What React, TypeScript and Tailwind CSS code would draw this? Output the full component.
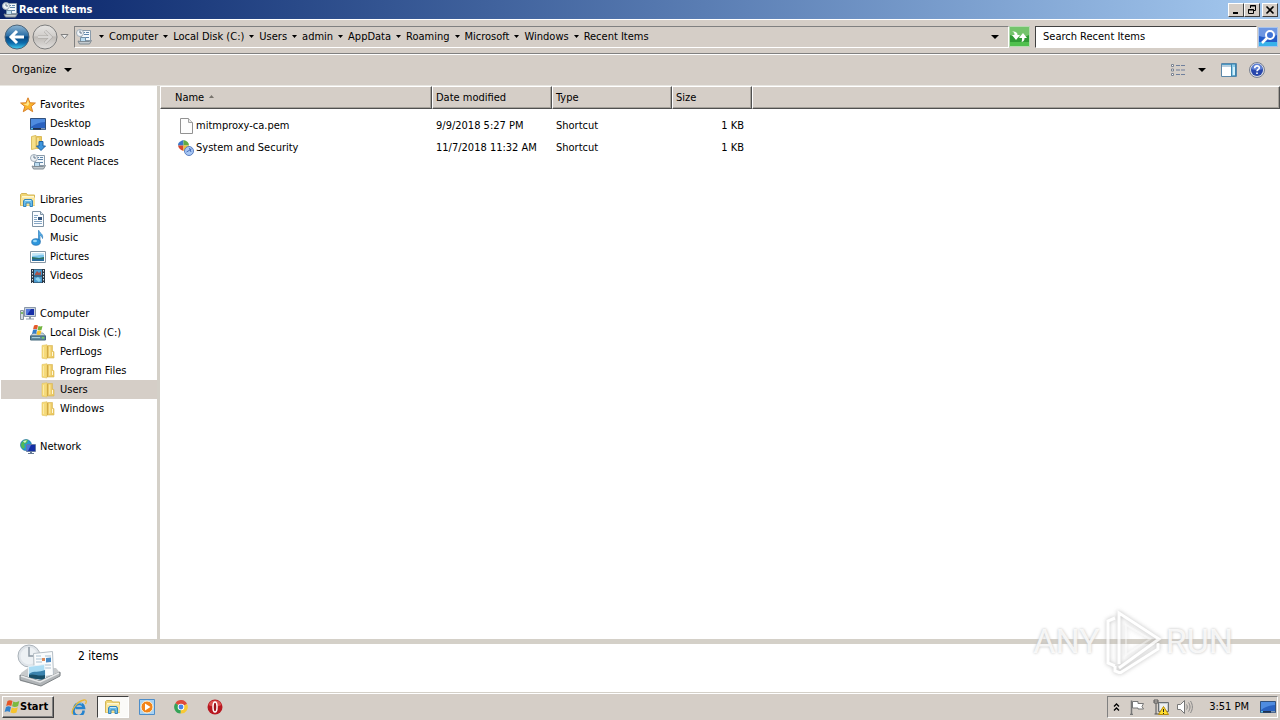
import { ReactNode, useState } from "react";

interface TreeItem {
    label: string;
    icon: ReactNode;
    level: number;
}

interface FileItem {
    name: string;
    icon: ReactNode;
    modified: string;
    type: string;
    size: string;
}

const path = [
    "Computer",
    "Local Disk (C:)",
    "Users",
    "admin",
    "AppData",
    "Roaming",
    "Microsoft",
    "Windows",
    "Recent Items",
];

const groups: TreeItem[][] = [
    [
        { label: "Favorites", icon: <StarIcon />, level: 0 },
        { label: "Desktop", icon: <DesktopIcon />, level: 1 },
        { label: "Downloads", icon: <DownloadsIcon />, level: 1 },
        { label: "Recent Places", icon: <RecentIcon />, level: 1 },
    ],
    [
        { label: "Libraries", icon: <LibraryIcon />, level: 0 },
        { label: "Documents", icon: <DocumentIcon />, level: 1 },
        { label: "Music", icon: <MusicIcon />, level: 1 },
        { label: "Pictures", icon: <PictureIcon />, level: 1 },
        { label: "Videos", icon: <VideoIcon />, level: 1 },
    ],
    [
        { label: "Computer", icon: <ComputerIcon />, level: 0 },
        { label: "Local Disk (C:)", icon: <DiskIcon />, level: 1 },
        { label: "PerfLogs", icon: <FolderIcon />, level: 2 },
        { label: "Program Files", icon: <FolderIcon />, level: 2 },
        { label: "Users", icon: <FolderIcon />, level: 2 },
        { label: "Windows", icon: <FolderIcon />, level: 2 },
    ],
    [{ label: "Network", icon: <NetworkIcon />, level: 0 }],
];

const files: FileItem[] = [
    {
        name: "mitmproxy-ca.pem",
        icon: <BlankFileIcon />,
        modified: "9/9/2018 5:27 PM",
        type: "Shortcut",
        size: "1 KB",
    },
    {
        name: "System and Security",
        icon: <SecurityIcon />,
        modified: "11/7/2018 11:32 AM",
        type: "Shortcut",
        size: "1 KB",
    },
];

const indents = ["pl-[19px]", "pl-[29px]", "pl-[39px]"];

export default function App() {
    return (
        <div className="relative flex min-h-screen flex-col bg-[#d5cec7] font-['DejaVu_Sans_Condensed','DejaVu_Sans',sans-serif] text-[11px] leading-4 text-black">
            <TitleBar />
            <AddressBar />
            <Toolbar />
            <main className="flex grow border-t border-[#e9e7e2] bg-white">
                <Sidebar />
                <FileTable />
            </main>
            <DetailsPane />
            <Taskbar />
            <Watermark />
        </div>
    );
}

function TitleBar() {
    const button =
        "flex h-[14px] w-4 items-center justify-center border border-t-white border-l-white border-r-[#404040] border-b-[#404040] bg-[#d5cec7]";
    return (
        <header className="flex h-[19px] items-center bg-linear-to-r from-[#0a246a] to-[#a6caf0] px-[2px]">
            <RecentIcon />
            <h1 className="grow pl-px font-bold text-white">Recent Items</h1>
            <button className={button} aria-label="Minimize">
                <svg width="10" height="10" viewBox="0 0 10 10">
                    <path d="M2 8h5" stroke="#000" strokeWidth="2" />
                </svg>
            </button>
            <button className={button} aria-label="Restore">
                <svg width="10" height="10" viewBox="0 0 10 10" fill="none" stroke="#000">
                    <path d="M3.5 3V.5h5v5H7M3 1h6M1.5 4.500h5v4h-5zM1 5h6" />
                </svg>
            </button>
            <button className={`${button} ml-[2px]`} aria-label="Close">
                <svg width="10" height="10" viewBox="0 0 10 10">
                    <path d="M1.500 1.500l7 7M8.500 1.500l-7 7" stroke="#000" strokeWidth="1.600" />
                </svg>
            </button>
        </header>
    );
}

function Caret({ small = false }: { small?: boolean }) {
    return small ? (
        <svg width="5" height="3" viewBox="0 0 5 3">
            <path d="M0 0h5L2.500 3z" />
        </svg>
    ) : (
        <svg width="8" height="4" viewBox="0 0 8 4">
            <path d="M0 0h8L4 4z" />
        </svg>
    );
}

function AddressBar() {
    return (
        <div className="flex h-[35px] items-center border-t border-b border-t-white border-b-[#808080] shadow-[0_1px_0_#fff]">
            <button className="ml-1" aria-label="Back">
                <BackIcon />
            </button>
            <button className="ml-[2px]" aria-label="Forward">
                <ForwardIcon />
            </button>
            <button className="ml-[2px]" aria-label="Recent pages">
                <svg width="9" height="6" viewBox="0 0 9 6">
                    <path d="M1 .5h7L4.500 4.500z" fill="#eee" stroke="#808080" />
                </svg>
            </button>
            <nav className="ml-[5px] flex h-[22px] grow items-center border border-t-[#808080] border-r-white border-b-white border-l-[#808080]">
                <span className="pr-[2px] pl-px">
                    <RecentIcon />
                </span>
                {path.map((item) => (
                    <span key={item} className="flex items-center">
                        <button className="px-[5px]" aria-label={`Folders before ${item}`}>
                            <Caret small />
                        </button>
                        <button className="whitespace-nowrap">{item}</button>
                    </span>
                ))}
                <button className="mr-[9px] ml-auto" aria-label="Previous locations">
                    <Caret />
                </button>
            </nav>
            <button aria-label="Refresh">
                <RefreshIcon />
            </button>
            <div className="ml-[5px] flex h-[22px] border border-t-[#404040] border-r-white border-b-white border-l-[#404040] bg-white">
                <input
                    aria-label="Search"
                    placeholder="Search Recent Items"
                    className="w-[220px] pl-[7px] outline-none placeholder:text-black"
                />
            </div>
            <button className="mr-[2px] ml-px" aria-label="Start search">
                <SearchIcon />
            </button>
        </div>
    );
}

function Toolbar() {
    return (
        <div className="flex h-[31px] items-center pr-[15px] pl-3">
            <button className="mr-auto flex items-center gap-2">
                Organize
                <Caret />
            </button>
            <button aria-label="Change your view">
                <svg width="16" height="14" viewBox="0 0 16 14" fill="none">
                    <path d="M1.500 1.500h2v2h-2zM1.500 6h2v2h-2zM1.500 10.500h2v2h-2z" fill="#fff" stroke="#7a8290" />
                    <path d="M6 2.500h4M11 2.500h4M6 7h4M11 7h4M6 11.500h4M11 11.500h4" stroke="#6f7f9c" />
                </svg>
            </button>
            <button className="mx-3" aria-label="More options">
                <Caret />
            </button>
            <button className="mx-[3px]" aria-label="Show the preview pane">
                <svg width="16" height="14" viewBox="0 0 16 14">
                    <path d="M.5.5h15v13H.5z" fill="#fff" stroke="#5a86a8" />
                    <path d="M1 1h14v2H1z" fill="#4d9ac4" />
                    <path d="M1 2h9v2H1z" fill="#b7cfe0" />
                    <path d="M10.500 1h4v12h-4z" fill="#8fcdea" stroke="#3c86b0" />
                    <path d="M12 4h2v8h-2z" fill="#d4f0fb" />
                </svg>
            </button>
            <button className="ml-[9px]" aria-label="Get help">
                <svg width="16" height="16" viewBox="0 0 16 16">
                    <circle cx="8" cy="8" r="7.500" fill="#d9dde6" stroke="#777f91" />
                    <circle cx="8" cy="8" r="6" fill="#2746ac" />
                    <path d="M2.500 7a5.500 5.500 0 0111 0c-3 1.500-8 1.500-11 0z" fill="#5f80d4" />
                    <path d="M5.700 6.200C5.700 3 10.500 3.200 10.300 6c-.1 1.600-2.300 1.500-2.300 3.300M8 10.500v1.600" fill="none" stroke="#fff" strokeWidth="1.600" />
                </svg>
            </button>
        </div>
    );
}

function Sidebar() {
    const [selected, setSelected] = useState("Users");

    return (
        <aside className="flex w-40 shrink-0 flex-col gap-[19px] border-r-[3px] border-[#d4d0c8] pt-[9px] pl-px">
            {groups.map((group, i) => (
                <ul key={i}>
                    {group.map((item) => (
                        <li key={item.label}>
                            <button
                                onClick={() => setSelected(item.label)}
                                className={`flex h-[19px] w-full items-center gap-1 ${indents[item.level]} ${
                                    selected === item.label ? "bg-[#d5cec7]" : ""
                                }`}
                            >
                                {item.icon}
                                {item.label}
                            </button>
                        </li>
                    ))}
                </ul>
            ))}
        </aside>
    );
}

function FileTable() {
    const head =
        "h-[23px] border-t border-r border-b border-l border-t-white border-l-white border-r-[#505050] border-b-[#505050] bg-[#d5cec7] pt-px pl-[3px] text-left font-normal shadow-[inset_-1px_-1px_0_#a5a19a]";
    return (
        <div className="grow">
            <table className="w-full table-fixed border-separate border-spacing-0">
                <colgroup>
                    <col className="w-[272px]" />
                    <col className="w-[120px]" />
                    <col className="w-[120px]" />
                    <col className="w-20" />
                    <col />
                </colgroup>
                <thead>
                    <tr>
                        <th className={head}>
                            <button className="flex items-center gap-[5px] pl-[11px]">
                                Name
                                <svg width="5" height="3" viewBox="0 0 5 3" className="mb-1">
                                    <path d="M0 3h5L2.500 0z" fill="#77736c" />
                                </svg>
                            </button>
                        </th>
                        <th className={head}>Date modified</th>
                        <th className={head}>Type</th>
                        <th className={head}>Size</th>
                        <th className={head}></th>
                    </tr>
                </thead>
                <tbody className="before:block before:h-[6px]">
                    {files.map((file) => (
                        <tr key={file.name} className="h-[22px]">
                            <td>
                                <span className="flex items-center gap-[2px] pl-[18px]">
                                    {file.icon}
                                    {file.name}
                                </span>
                            </td>
                            <td className="pl-1">{file.modified}</td>
                            <td className="pl-1">{file.type}</td>
                            <td className="pr-2 text-right">{file.size}</td>
                            <td></td>
                        </tr>
                    ))}
                </tbody>
            </table>
        </div>
    );
}

function DetailsPane() {
    return (
        <section className="flex h-[53px] shrink-0 gap-4 border-t-[5px] border-[#d4d0c8] bg-white pl-4">
            <RecentLargeIcon />
            <p className="pt-1 text-[12px] leading-4">2 items</p>
        </section>
    );
}

function Taskbar() {
    const item = "flex h-[22px] w-8 items-center justify-center";
    return (
        <footer className="flex h-7 shrink-0 items-center border-t border-[#d4d0c8] pr-[2px] pl-[2px] shadow-[inset_0_1px_0_#fff]">
            <button className="mr-[9px] flex h-[22px] w-[52px] items-center border border-t-white border-r-[#404040] border-b-[#404040] border-l-white pl-px font-bold shadow-[inset_-1px_-1px_0_#808080]">
                <WindowsIcon />
                Start
            </button>
            <button className={item} aria-label="Internet Explorer">
                <IeIcon />
            </button>
            <button
                className={`${item} mr-[2px] ml-[2px] border border-t-[#404040] border-r-white border-b-white border-l-[#404040] bg-[#fbfaf8]`}
                aria-label="Windows Explorer"
            >
                <LibraryIcon />
            </button>
            <button className={item} aria-label="Windows Media Player">
                <PlayerIcon />
            </button>
            <button className={`${item} ml-[2px]`} aria-label="Google Chrome">
                <ChromeIcon />
            </button>
            <button className={`${item} ml-[2px]`} aria-label="Opera">
                <OperaIcon />
            </button>
            <div className="ml-auto flex h-[22px] items-center border border-t-[#808080] border-r-white border-b-white border-l-[#808080] pr-px pl-[5px]">
                <button aria-label="Show hidden icons">
                    <svg width="7" height="8" viewBox="0 0 7 8" fill="none" stroke="#000">
                        <path d="M1 3.500L3.500 1 6 3.500M1 7.500L3.500 5 6 7.500" strokeWidth="1.300" />
                    </svg>
                </button>
                <span className="ml-[9px] flex gap-2">
                    <FlagIcon />
                    <TrayNetworkIcon />
                    <SpeakerIcon />
                </span>
                <time className="ml-4">3:51 PM</time>
                <button className="ml-[11px]" aria-label="Show desktop">
                    <DesktopIcon />
                </button>
            </div>
        </footer>
    );
}

function Watermark() {
    return (
        <div className="pointer-events-none absolute right-[47px] bottom-[46px] flex items-center gap-[3px] font-[Roboto,sans-serif] text-[34px] leading-[66px] text-white/80 [text-shadow:0_0_3px_#bbb]">
            <span>ANY</span>
            <svg
                width="60"
                height="66"
                viewBox="0 0 60 66"
                fill="none"
                stroke="#fff"
                strokeWidth="3"
                className="opacity-80 drop-shadow-[0_0_2px_#aaa]"
            >
                <path d="M12 10l-7 3v42l7 3" />
                <path d="M16 56V5l40 26-40 29" />
                <path d="M12 58v5l5 2 38-24v-6" />
                <path d="M23 17v30l24-16z" strokeWidth="2" opacity="0.500" />
            </svg>
            <span>RUN</span>
        </div>
    );
}

function Icon({ children }: { children: ReactNode }) {
    return (
        <svg width="16" height="16" viewBox="0 0 16 16" className="shrink-0" aria-hidden="true">
            {children}
        </svg>
    );
}

function BackIcon() {
    return (
        <svg width="26" height="26" viewBox="0 0 26 26">
            <defs>
                <linearGradient id="back" x2="0" y2="1">
                    <stop offset="0" stopColor="#8fb6d4" />
                    <stop offset="0.450" stopColor="#2a6ea6" />
                    <stop offset="0.500" stopColor="#07457f" />
                    <stop offset="0.750" stopColor="#0c6bab" />
                    <stop offset="1" stopColor="#46d2f3" />
                </linearGradient>
            </defs>
            <circle cx="13" cy="13" r="12" fill="url(#back)" stroke="#4c6479" />
            <path d="M20 13H8M13 7l-6 6 6 6" fill="none" stroke="#fff" strokeWidth="3" />
        </svg>
    );
}

function ForwardIcon() {
    return (
        <svg width="26" height="26" viewBox="0 0 26 26">
            <defs>
                <linearGradient id="forward" x2="0" y2="1">
                    <stop offset="0" stopColor="#e6e4e2" />
                    <stop offset="0.450" stopColor="#d2cfcc" />
                    <stop offset="0.500" stopColor="#bebab6" />
                    <stop offset="1" stopColor="#e2e0de" />
                </linearGradient>
            </defs>
            <circle cx="13" cy="13" r="12" fill="url(#forward)" stroke="#7e7e7e" />
            <path d="M6 13h12M13 7l6 6-6 6" fill="none" stroke="#aaa7a4" strokeWidth="3" />
            <path d="M6 13h12M13 7l6 6-6 6" fill="none" stroke="#d8d6d4" strokeWidth="2" />
        </svg>
    );
}

function RefreshIcon() {
    return (
        <svg width="21" height="21" viewBox="0 0 21 21">
            <path d="M.5.5h20v20H.5z" fill="#2f9a35" stroke="#b5dbb0" />
            <path d="M1 1h19v8c-6 3-13 3-19 0z" fill="#74c46c" />
            <path d="M1 16h19v4H1z" fill="#4fc04d" />
            <path d="M3 10l4-5 4 5H8.500c0 2 .5 3 2.500 3.500-3.500.5-5.500-1-5.500-3.500z" fill="#fff" transform="rotate(180 7 9.500)" />
            <path d="M10 12l4-5 4 5h-2.500c0 2-.5 3.500-3 4 .5-1 .5-2 .5-4z" fill="#fff" />
        </svg>
    );
}

function SearchIcon() {
    return (
        <svg width="20" height="20" viewBox="0 0 20 20">
            <path d="M.5.5h19v19H.5z" fill="#245cc8" stroke="#a9c4ec" />
            <path d="M1 1h18v7C13 11 7 11 1 9z" fill="#6d96e2" />
            <path d="M1 15h18v4H1z" fill="#39b2ea" />
            <circle cx="12" cy="8" r="4" fill="#3f73d6" stroke="#fff" strokeWidth="2" />
            <path d="M9 11l-5 5" stroke="#fff" strokeWidth="2.500" />
        </svg>
    );
}

function StarIcon() {
    return (
        <Icon>
            <path
                d="M8 .8l2 5 5.400.2-4.200 3.400 1.500 5.300L8 11.700l-4.700 3 1.500-5.300L.6 6 6 5.800z"
                fill="#fbb52c"
                stroke="#d9822b"
                strokeLinejoin="round"
            />
            <path d="M8 3l1.200 3.800L8 9 3 7l3.500-.3z" fill="#ffe68c" />
        </Icon>
    );
}

function DesktopIcon() {
    return (
        <Icon>
            <path d="M.5 2.500h15v11H.5z" fill="#2a62c0" stroke="#31517d" />
            <path d="M1 3h14v3C9 6.500 5 8 1 11z" fill="#4f8ce0" />
            <path d="M1 12h14v1.500H1z" fill="#20324f" />
            <path d="M1 12h2v1.500H1z" fill="#58c3ec" />
            <path d="M11 12h4v1.500h-4z" fill="#7d97b8" />
        </Icon>
    );
}

function DownloadsIcon() {
    return (
        <Icon>
            <path d="M1.500 1.500L6 .5v13l-4.500 1z" fill="#f6e08a" stroke="#dcbf62" />
            <path d="M6.500 1.500h5v12h-5z" fill="#edcb62" stroke="#dbbb5a" />
            <path d="M7.500 3h1v9h-1z" fill="#fff5c4" />
            <path d="M9 6.500h4V11h2.500L11 15.500 6.500 11H9z" fill="#3d95dd" stroke="#1c60a3" />
        </Icon>
    );
}

function RecentIcon() {
    return (
        <Icon>
            <path d="M5.500 1.500h9v10h-9z" fill="#f3f8fc" stroke="#8a9baa" />
            <path d="M7 3.500h2M10 3.500h3M8 5.500h5M8 8.500h5" stroke="#5f86ab" />
            <path d="M4.500 8.500h5v4h-5z" fill="#bcdcf0" stroke="#7491a8" />
            <path d="M2 12l1.500 3h10l2-3.500-2 1H4z" fill="#c4cbd0" stroke="#808b93" />
            <circle cx="4" cy="4" r="3.500" fill="#eef2f6" stroke="#a1adb8" />
            <path d="M4 1.500V4h2" fill="none" stroke="#667a8d" />
        </Icon>
    );
}

function LibraryIcon() {
    return (
        <Icon>
            <path d="M.5 13.500v-11l1-1h5l1 1.500h7v10.500z" fill="#f1d675" stroke="#d3b557" />
            <path d="M2 4h12v2H2z" fill="#fff8d2" />
            <path d="M1 5.500h14v8H1z" fill="#f8e49a" />
            <path d="M3.500 14.500V9l1-1.500h7l1 1.500v5.500H10V11H6v3.500z" fill="#69bce9" stroke="#3584bb" />
            <path d="M5 8.500h6" stroke="#c6eafa" />
        </Icon>
    );
}

function DocumentIcon() {
    return (
        <Icon>
            <path d="M2.500.5h8l3 3v12h-11z" fill="#fbfdff" stroke="#7f93a5" />
            <path d="M10.500.5v3h3" fill="#d7e2ec" stroke="#7f93a5" />
            <path d="M4 4.500h4M4 6.500h3M4 8.500h3M4 10.500h8M4 12.500h8" stroke="#86a6c4" />
            <path d="M8 6h4v3H8z" fill="#34557d" />
        </Icon>
    );
}

function MusicIcon() {
    return (
        <Icon>
            <path d="M9 .5c.5 3 4.500 3 3.500 8-.5-2-1.500-3-2.500-3.300V12H8.500V.5z" fill="#53ace4" stroke="#2c7dbd" strokeWidth="0.700" />
            <ellipse cx="6" cy="12" rx="4.300" ry="3.300" fill="#2e96dc" stroke="#1d6cad" strokeWidth="0.700" />
            <ellipse cx="5" cy="11" rx="2" ry="1.200" fill="#9ad8f7" />
        </Icon>
    );
}

function PictureIcon() {
    return (
        <Icon>
            <path d="M.5 2.500h15v11H.5z" fill="#fff" stroke="#8697a5" />
            <path d="M2 4h12v8H2z" fill="#7cc6ee" />
            <path d="M2 4h12v2c-4-1-7 1-12 1z" fill="#c7e7f7" />
            <path d="M2 8c3 0 5 1 7 1s3-1 5-1v2H2z" fill="#2c7265" />
            <path d="M2 10h12v2H2z" fill="#286c9d" />
        </Icon>
    );
}

function VideoIcon() {
    return (
        <Icon>
            <path d="M1 1h14v14H1z" fill="#293644" />
            <path d="M4 1.500h8v6H4zM4 8.500h8v6H4z" fill="#4b9bd0" />
            <path d="M5 6l2-3 2 2 2-2v4H5z" fill="#a4534b" />
            <path d="M5 11l3-2 3 3-2 2z" fill="#8dd4ef" />
            <path d="M2.500 2v13M13.500 2v13" stroke="#dce5ec" strokeDasharray="1.500 1.500" />
        </Icon>
    );
}

function ComputerIcon() {
    return (
        <Icon>
            <path d="M.5 4.500h3v9h-3z" fill="#d4dce2" stroke="#88949d" />
            <path d="M1 6h2v2H1z" fill="#7cba68" />
            <path d="M4.500 1.500h11v9h-11z" fill="#c7d2df" stroke="#8a97a8" />
            <path d="M6 3h8v6H6z" fill="#172fa8" />
            <path d="M6 3h5L7 9H6z" fill="#5276dc" />
            <path d="M9 11h2v1.500h3v1H6v-1h3z" fill="#8d9caa" />
        </Icon>
    );
}

function DiskIcon() {
    return (
        <Icon>
            <path d="M3 8h10l2.500 3H.5z" fill="#c5d4df" stroke="#708b9c" strokeWidth="0.700" />
            <path d="M.5 11h15v4H.5z" fill="#5f8ba0" stroke="#41677b" />
            <path d="M2 12.500h8" stroke="#a8cfdc" />
            <path d="M12 12h2v1.500h-2z" fill="#76d353" />
            <path d="M4 .5c2-1 3-.5 4 0L7 4.500c-1-.6-2-.7-4 0z" fill="#e45a2b" />
            <path d="M8.500 1c1.500.7 2.500.5 4 0L11.500 5c-1.500.6-2.500.5-4 0z" fill="#73b43e" />
            <path d="M3 5c2-.6 3-.5 4 0L6 9c-1-.6-2-.6-4 0z" fill="#337fc9" />
            <path d="M7.500 5.500c1.500.6 2.500.5 4 0l-1 4c-1.500.6-2.500.5-4 0z" fill="#f6c42e" />
        </Icon>
    );
}

function FolderIcon() {
    return (
        <Icon>
            <path d="M2 1.500L7 .7V15l-5-.8z" fill="#f5da7a" stroke="#e2c461" strokeWidth="0.600" />
            <path d="M7.500 1.500h5V7l1.500.7V14H7.500z" fill="#ecca66" stroke="#d9b650" strokeWidth="0.600" />
            <path d="M7 2h1v12H7z" fill="#d2a944" />
            <path d="M9 2.500h1.500v10H9z" fill="#fbe69a" />
            <path d="M12 8h1v4h-1z" fill="#fff8da" />
            <path d="M3.500 3v10" stroke="#fdeaa4" />
        </Icon>
    );
}

function NetworkIcon() {
    return (
        <Icon>
            <circle cx="6" cy="6" r="5.500" fill="#259bd0" stroke="#196494" strokeWidth="0.600" />
            <path d="M1.500 4C3 1 6 0 8 1L7 4 4 5l1 3-2 2C1 8 .6 6 1.500 4z" fill="#54ba54" />
            <path d="M3 2.500c1-1 3-1.300 4-1L5 4z" fill="#d5f3d1" />
            <path d="M6.500 5.500h9v7h-9z" fill="#b3c3da" stroke="#667ba3" />
            <path d="M7 6h8v6H7z" fill="#152da5" />
            <path d="M7 6h4l-3 6H7z" fill="#4d74dc" />
            <path d="M10 13h2v1h2v1H8v-1h2z" fill="#677b95" />
        </Icon>
    );
}

function BlankFileIcon() {
    return (
        <Icon>
            <path d="M2.500.5h8l4 4v11h-12z" fill="#fdfdfd" stroke="#929292" />
            <path d="M10.500.5v4h4" fill="#e7e7e7" stroke="#a2a2a2" />
        </Icon>
    );
}

function SecurityIcon() {
    return (
        <Icon>
            <path d="M5.500 0v5.500H0C0 3 1 1.500 5.500 0z" fill="#3b78c9" />
            <path d="M5.500 0C9 1 11 2.500 11 5.500H5.500z" fill="#62ab45" />
            <path d="M0 5.500h5.500V11C2 10 .5 8 0 5.500z" fill="#d8472f" />
            <path d="M5.500 5.500H11C10.500 8 9 10 5.500 11z" fill="#f0bf35" />
            <circle cx="11" cy="11" r="4.500" fill="#a8c7f4" stroke="#5b7fc0" />
            <path d="M8.500 12l5-3M11.500 8l1.500 4" stroke="#456dba" />
        </Icon>
    );
}

function RecentLargeIcon() {
    return (
        <svg width="46" height="44" viewBox="0 0 46 44" aria-hidden="true">
            <path d="M5 29l7-5h28l5 6-20 12L4 37z" fill="#c7cacc" />
            <circle cx="13" cy="12" r="11" fill="#dfe4e9" stroke="#aab2b9" />
            <circle cx="13" cy="12" r="8.500" fill="#edf1f4" />
            <path d="M13 3v9h7" fill="none" stroke="#8c98a3" strokeWidth="1.500" />
            <path d="M17.500 9.500l19-2 1 24-19 2z" fill="#fafcfd" stroke="#b6bfc6" />
            <path d="M20 12h5M20 15h6M20 18h6M29 12h6M29 21h6M29 24h6" stroke="#abc0d0" />
            <path d="M30 14l5-.5v4.500l-5 .5z" fill="#4b8bc4" />
            <path d="M29 14h-3v3h3z" fill="#dc8b5c" />
            <path d="M12.500 22.500l16-2 1 16-17-2z" fill="#aadcf4" stroke="#e9f3f8" />
            <path d="M13 30c5-4 10-1 16-4v10l-16-2z" fill="#3a83ae" />
            <path d="M13 31c5-2 9 2 16 0v5l-16-2z" fill="#184e67" />
            <path d="M4 31l20 6 20-9v4L25 42 4 36z" fill="#b1b5b8" stroke="#7f8487" />
            <path d="M5 32l19 6 19-9" fill="none" stroke="#e7e9ea" strokeWidth="1.500" />
        </svg>
    );
}

function WindowsIcon() {
    return (
        <Icon>
            <path d="M3.500 2C5 .8 7 1 8.500 2L7.300 7C5.500 6 4 6 2.200 7z" fill="#e65526" />
            <path d="M9.300 2.500c2 1 4 .8 6-.5l-1.200 5c-2 1.200-4 1.200-6 .3z" fill="#7bb93f" />
            <path d="M2 8c1.800-1 3.500-.8 5 .1l-1.200 5c-1.500-1-3.300-1-5.200 0z" fill="#3282cc" />
            <path d="M7.800 8.500c2 1 4 .8 6-.3l-1.300 5.200c-2 1.100-4 1-6 0z" fill="#f6c32d" />
        </Icon>
    );
}

function IeIcon() {
    return (
        <Icon>
            <path d="M12.500 11.500A5 5 0 113.500 9a4.800 4.800 0 019.500 0H5" fill="none" stroke="#2583ce" strokeWidth="2.600" />
            <path d="M5 5.500C7 3.500 9 3.500 11 5" fill="none" stroke="#80cdf4" />
            <path d="M2 15C-1.500 13 6 2 13 1c3-.3 2.500 2 1.500 4" fill="none" stroke="#eab837" strokeWidth="1.300" />
        </Icon>
    );
}

function PlayerIcon() {
    return (
        <Icon>
            <path d="M.5.5h15v15H.5z" fill="#a8d2f3" stroke="#4d8dc9" />
            <circle cx="8" cy="8" r="6" fill="#f28419" stroke="#fff2d7" />
            <path d="M6 4.500v7L11.500 8z" fill="#fff" />
        </Icon>
    );
}

function ChromeIcon() {
    return (
        <Icon>
            <path d="M8 8L2.400 4.200A6.500 6.500 0 0114 5z" fill="#de4a3b" />
            <path d="M8 8l6-3a6.500 6.500 0 01-6.500 9.500z" fill="#f8c934" />
            <path d="M8 8l-.5 6.500A6.500 6.500 0 012.400 4.200z" fill="#35a357" />
            <circle cx="8" cy="8" r="3.300" fill="#fff" />
            <circle cx="8" cy="8" r="2.400" fill="#4783e7" />
        </Icon>
    );
}

function OperaIcon() {
    return (
        <Icon>
            <circle cx="8" cy="8" r="7.500" fill="#b81820" />
            <path d="M1.500 6a7 7 0 0113 0C10 8 6 8 1.500 6z" fill="#dd5250" />
            <ellipse cx="8" cy="8" rx="2" ry="5" fill="#9d1219" stroke="#fff" strokeWidth="1.500" />
        </Icon>
    );
}

function FlagIcon() {
    return (
        <Icon>
            <path d="M2.500 15V1.500M1 15.500h3" fill="none" stroke="#777" strokeWidth="1.500" />
            <path d="M3.500 2.500H9v2h5.500l-1.500 3 1.500 2.500H9v-1H3.500z" fill="#fff" stroke="#777" />
        </Icon>
    );
}

function TrayNetworkIcon() {
    return (
        <Icon>
            <path d="M5.500 3.500h10v9h-10z" fill="#c6cbcf" stroke="#686d70" />
            <path d="M7 5h7v6H7z" fill="#eceff1" />
            <path d="M1 1v3h4V1M3 4v11M1.500 15h5M2 0v3M4 0v3" fill="none" stroke="#555" />
            <path d="M10.500 7.500l5 8h-10z" fill="#ffde2d" stroke="#b78b0a" />
            <path d="M10.500 10v3M10.500 14v1" stroke="#222" />
        </Icon>
    );
}

function SpeakerIcon() {
    return (
        <Icon>
            <path d="M.5 5.500h3l4-4v13l-4-4h-3z" fill="#fff" stroke="#777" />
            <path d="M9.500 5.500c1 1.500 1 3.500 0 5M11.500 3.500c2 3 2 6 0 9M13.500 2c2.500 4 2.500 8 0 12" fill="none" stroke="#888" />
        </Icon>
    );
}
